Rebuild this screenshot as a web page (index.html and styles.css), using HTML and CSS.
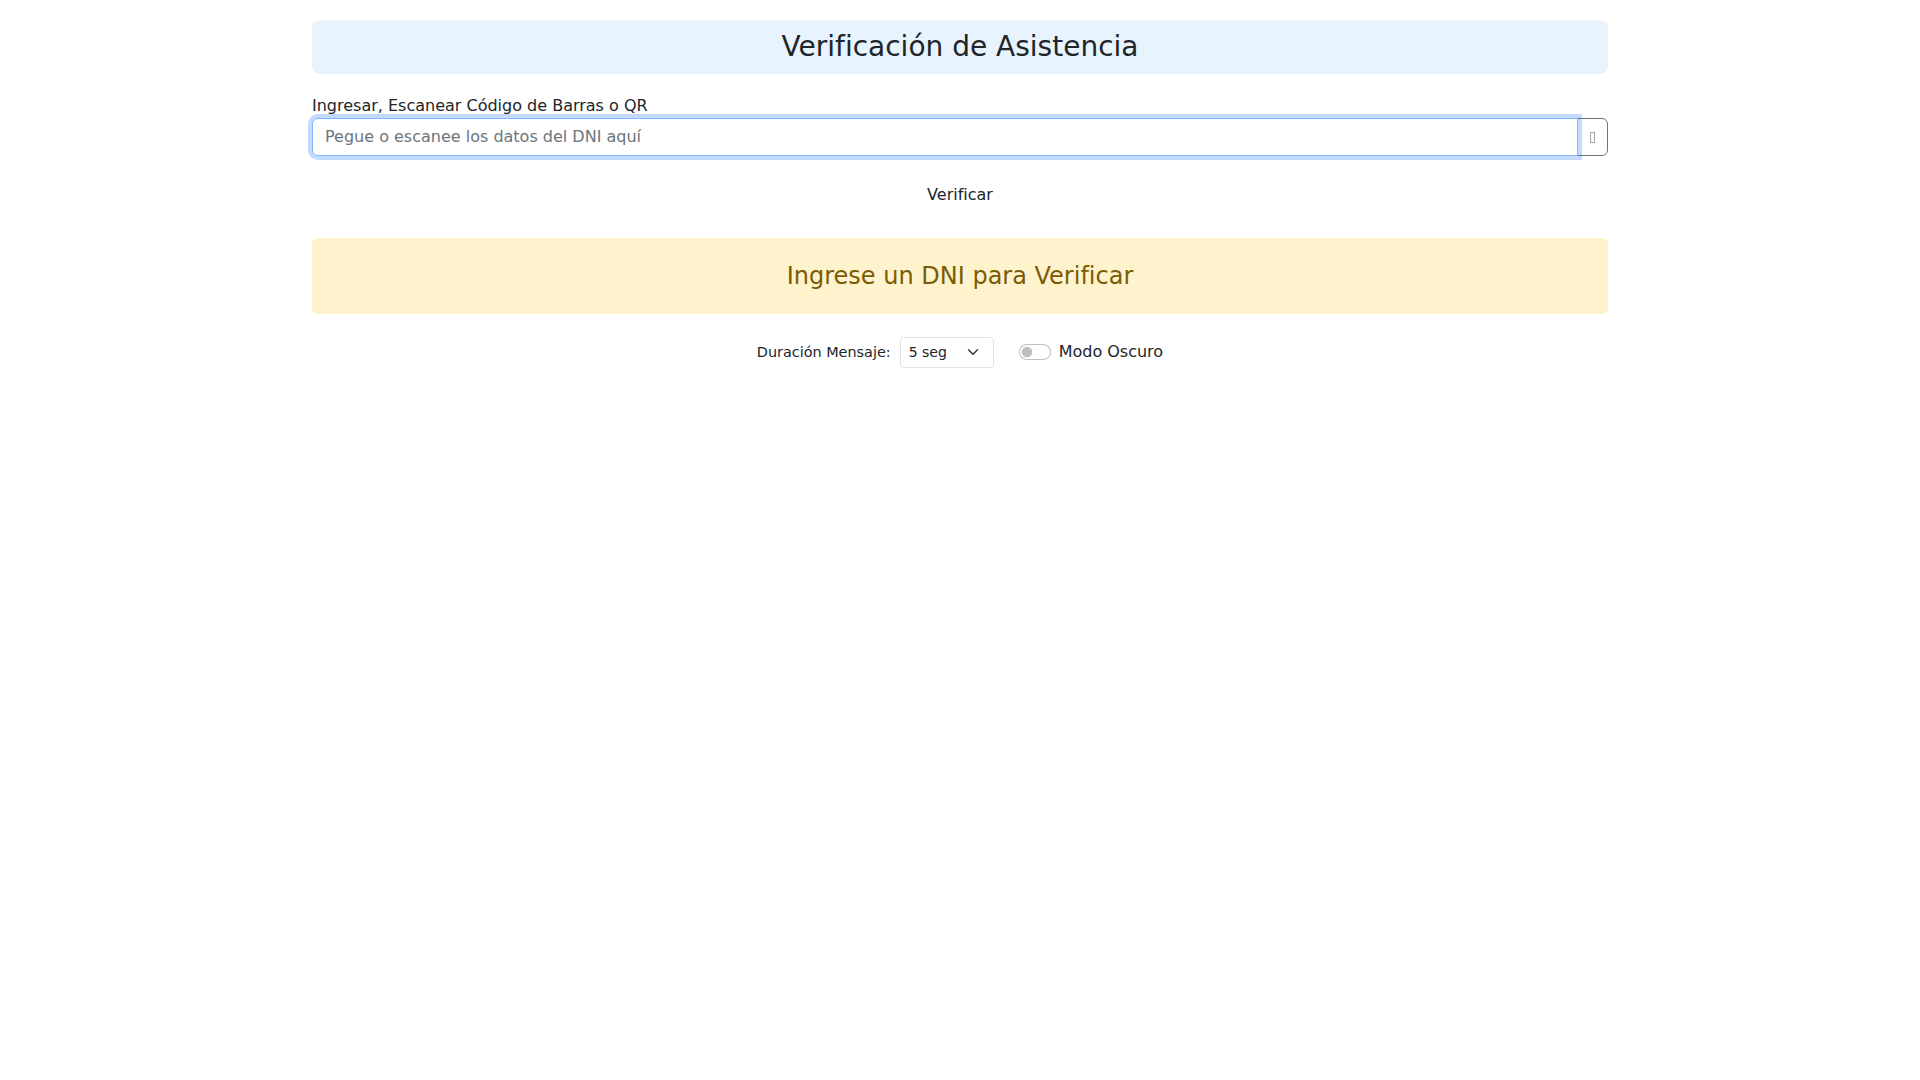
FILE: index.html
```html
<!DOCTYPE html>
<html lang="es">
<head>
<meta charset="utf-8">
<title>Verificación de Asistencia</title>
<link rel="stylesheet" href="styles.css">
</head>
<body>
<div class="container">
  <div class="header-box">
    <h3 class="title">Verificación de Asistencia</h3>
  </div>

  <label class="field-label" for="dni">Ingresar, Escanear Código de Barras o QR</label>
  <div class="input-group">
    <input id="dni" class="dni-input" type="text" placeholder="Pegue o escanee los datos del DNI aquí" autofocus>
    <button class="icon-btn" type="button"><span class="tofu"></span></button>
  </div>

  <div class="verify-row">
    <button class="verify-btn" type="button">Verificar</button>
  </div>

  <div class="alert-box">
    <h4 class="alert-text">Ingrese un DNI para Verificar</h4>
  </div>

  <div class="settings-row">
    <label class="small-label" for="dur">Duración Mensaje:</label>
    <select id="dur" class="dur-select">
      <option>3 seg</option>
      <option selected>5 seg</option>
      <option>10 seg</option>
      <option>15 seg</option>
    </select>
    <div class="switch-wrap">
      <input id="dark" class="switch" type="checkbox">
      <label class="switch-label" for="dark">Modo Oscuro</label>
    </div>
  </div>
</div>
</body>
</html>
```

FILE: styles.css
```css
* { box-sizing: border-box; }

html, body {
  margin: 0;
  padding: 0;
  background: #ffffff;
  color: #212529;
  font-family: "DejaVu Sans", sans-serif;
  font-size: 16px;
  line-height: 1.5;
}

.container {
  width: 1320px;
  margin: 0 auto;
  padding: 20px 12px 0;
  display: flex;
  flex-direction: column;
}

.header-box {
  background: #e7f3fd;
  border-radius: 8px;
  padding: 10px 16px;
  text-align: center;
  margin-bottom: 20px;
}

.title {
  margin: 0;
  font-size: 28px;
  font-weight: 400;
  line-height: 1.2;
  color: #212529;
}

.field-label {
  display: block;
  font-size: 16px;
  line-height: 24px;
}

.input-group {
  display: flex;
  align-items: stretch;
  height: 38px;
}

.dni-input {
  flex: 1 1 auto;
  min-width: 0;
  position: relative;
  z-index: 2;
  height: 38px;
  padding: 6px 12px;
  font-family: inherit;
  font-size: 16px;
  line-height: 1.5;
  color: #212529;
  background: #fff;
  border: 1px solid #86b7fe;
  border-radius: 6px 0 0 6px;
  box-shadow: 0 0 0 4px rgba(13, 110, 253, 0.25);
  outline: none;
  caret-color: #212529;
}

.dni-input::placeholder {
  color: #6c757d;
}

.icon-btn {
  width: 31px;
  margin-left: -1px;
  padding: 0;
  display: flex;
  align-items: center;
  justify-content: center;
  background: #fff;
  border: 1px solid #6c757d;
  border-radius: 0 6px 6px 0;
}

.tofu {
  display: block;
  width: 5px;
  height: 11px;
  border: 1px solid #a0a4a8;
  margin-top: 2px;
}

.verify-row {
  display: flex;
  justify-content: center;
  margin-top: 20px;
}

.verify-btn {
  font-family: inherit;
  font-size: 16px;
  line-height: 1.5;
  color: #212529;
  background: transparent;
  border: 1px solid transparent;
  border-radius: 6px;
  padding: 6px 12px;
}

.alert-box {
  margin-top: 24px;
  background: #fff3cd;
  border-radius: 6px;
  padding: 24px 16px;
  text-align: center;
}

.alert-text {
  margin: 0;
  font-size: 24px;
  font-weight: 400;
  line-height: 28px;
  color: #7a5c05;
}

.settings-row {
  margin-top: 23px;
  display: flex;
  justify-content: center;
  align-items: center;
}

.small-label {
  font-size: 14.4px;
  line-height: 21px;
  margin-right: 9px;
}

.dur-select {
  appearance: none;
  -webkit-appearance: none;
  height: 31px;
  width: 94px;
  padding: 4px 36px 4px 8px;
  font-family: inherit;
  font-size: 14px;
  line-height: 1.5;
  color: #212529;
  background-color: #fff;
  background-image: url("data:image/svg+xml,%3csvg xmlns='http://www.w3.org/2000/svg' viewBox='0 0 16 16'%3e%3cpath fill='none' stroke='%23343a40' stroke-linecap='round' stroke-linejoin='round' stroke-width='2' d='m2 5 6 6 6-6'/%3e%3c/svg%3e");
  background-repeat: no-repeat;
  background-position: right 12px center;
  background-size: 16px 12px;
  border: 1px solid #dee2e6;
  border-radius: 4px;
}

.switch-wrap {
  display: flex;
  align-items: center;
  margin-left: 25px;
}

.switch {
  appearance: none;
  -webkit-appearance: none;
  width: 32px;
  height: 16px;
  margin: 0 8px 0 0;
  border: 1px solid rgba(0, 0, 0, 0.25);
  border-radius: 16px;
  background-color: #fff;
  background-image: url("data:image/svg+xml,%3csvg xmlns='http://www.w3.org/2000/svg' viewBox='-4 -4 8 8'%3e%3ccircle r='3' fill='rgba%280,0,0,.25%29'/%3e%3c/svg%3e");
  background-repeat: no-repeat;
  background-position: left center;
  background-size: contain;
}

.switch-label {
  font-size: 16px;
  line-height: 24px;
}
```
